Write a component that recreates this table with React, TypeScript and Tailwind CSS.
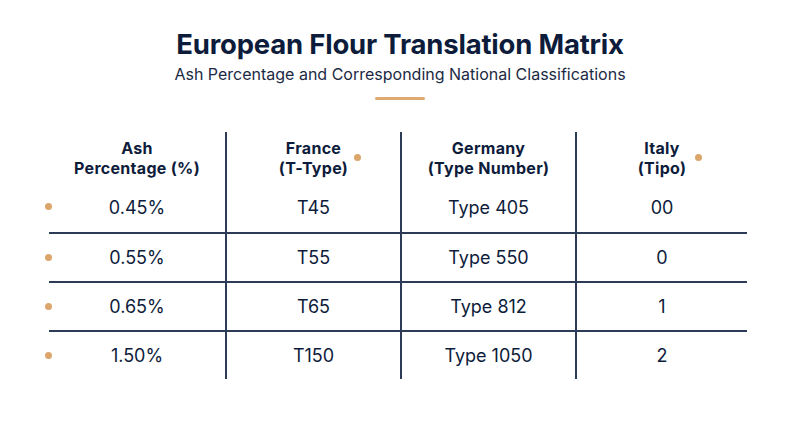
const rows = [
  ["0.45%", "T45", "Type 405", "00"],
  ["0.55%", "T55", "Type 550", "0"],
  ["0.65%", "T65", "Type 812", "1"],
  ["1.50%", "T150", "Type 1050", "2"],
];

const headers = [
  ["Ash", "Percentage (%)"],
  ["France", "(T-Type)"],
  ["Germany", "(Type Number)"],
  ["Italy", "(Tipo)"],
];

function Dot({ className }: { className: string }) {
  return <span className={`absolute h-[7px] w-[7px] rounded-full bg-[#dca56c] ${className}`} />;
}

export default function App() {
  return (
    <div
      className="w-[800px] h-[447px] bg-white text-[#0e1c3b] overflow-hidden"
      style={{ fontFamily: "Inter, 'Noto Sans', sans-serif" }}
    >
      <div className="flex flex-col items-center pt-[28px]">
        <h1 className="text-[27.5px] leading-[32px] font-bold tracking-[-0.2px]">
          European Flour Translation Matrix
        </h1>
        <p className="mt-[4px] text-[16px] leading-[20px] text-[#1c2a45]">
          Ash Percentage and Corresponding National Classifications
        </p>
        <div className="mt-[13px] h-[3px] w-[50px] rounded-full bg-[#dfaa72]" />
      </div>

      <div className="relative mx-auto mt-[32px] w-[698px] translate-x-[-2px]">
        <div className="relative grid grid-cols-[176px_175px_175px_172px] h-[51px]">
          {headers.map((h, i) => (
            <div
              key={i}
              className={`flex flex-col items-center justify-center text-[16px] leading-[20px] font-bold tracking-[0.3px] ${
                i > 0 ? "border-l-2 border-[#2c3b56]" : ""
              }`}
            >
              <span>{h[0]}</span>
              <span>{h[1]}</span>
            </div>
          ))}
          <Dot className="left-[305px] top-[22px]" />
          <Dot className="left-[646px] top-[22px]" />
        </div>
        {rows.map((r, ri) => (
          <div
            key={ri}
            className={`relative grid grid-cols-[176px_175px_175px_172px] h-[49px] ${
              ri > 0 ? "border-t-2 border-[#2c3b56]" : ""
            }`}
          >
            {r.map((c, ci) => (
              <div
                key={ci}
                className={`flex items-center justify-center text-[18px] ${
                  ci > 0 ? "border-l-2 border-[#2c3b56]" : ""
                }`}
              >
                {c}
              </div>
            ))}
            <Dot className="left-[-4px] top-[20px]" />
          </div>
        ))}
      </div>
    </div>
  );
}
